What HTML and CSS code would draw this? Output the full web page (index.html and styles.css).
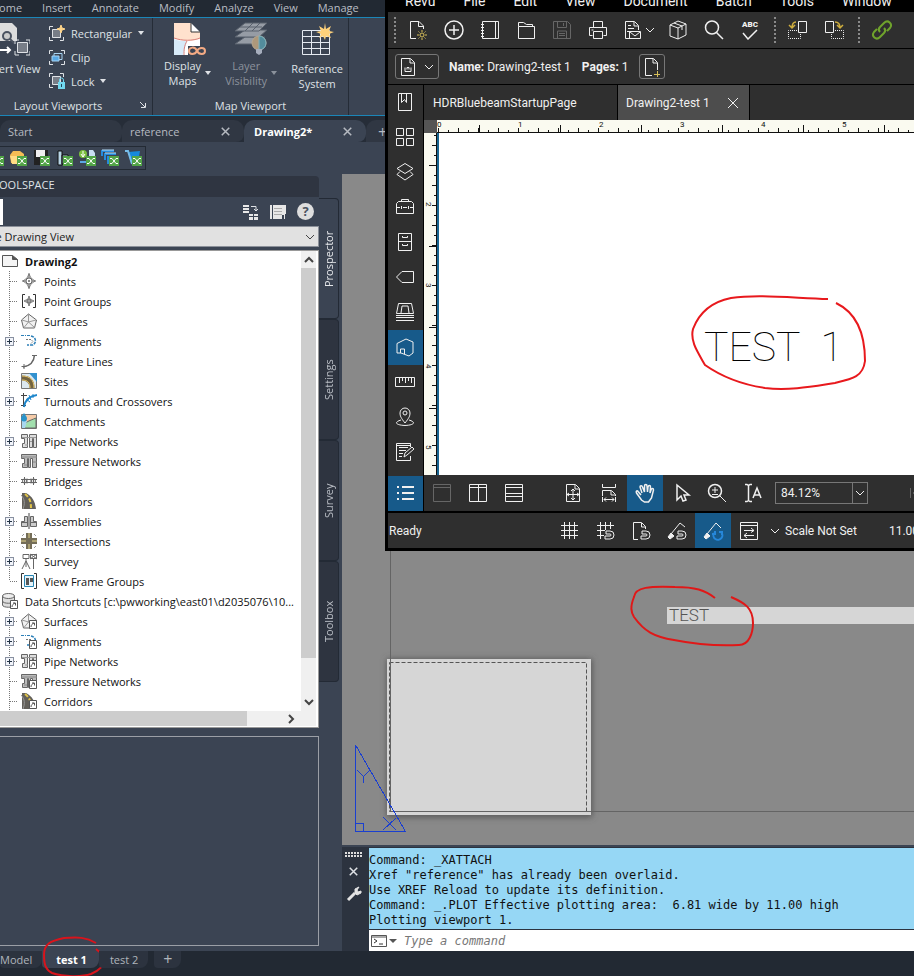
FILE: index.html
```html
<!DOCTYPE html>
<html lang="en">

<head>
    <meta charset="UTF-8" />
    <meta name="viewport" content="width=device-width, initial-scale=1.0" />
    <title>Drawing2 - test 1</title>
    <link rel="stylesheet" href="styles.css">
</head>

<body>
    <!-- Shared icons -->
    <svg class="defs" aria-hidden="true">
        <symbol id="chevron" viewBox="0 0 10 10"><path d="M1 3l4 4 4-4" /></symbol>
        <symbol id="caret" viewBox="0 0 6 4"><path d="M0 0h6L3 4z" fill="currentColor" stroke="none" /></symbol>
        <symbol id="close" viewBox="0 0 12 12"><path d="M1 1l10 10M11 1L1 11" /></symbol>
        <symbol id="branch" viewBox="0 0 20 20"><path d="M9.500 0v20M10 10.500h8" stroke="#777" stroke-dasharray="1 1" /></symbol>
        <symbol id="branch-end" viewBox="0 0 20 20"><path d="M9.500 0v10M10 10.500h8" stroke="#777" stroke-dasharray="1 1" /></symbol>
        <symbol id="branch-plus" viewBox="0 0 20 20"><path d="M9.500 0v20M10 10.500h8" stroke="#777" stroke-dasharray="1 1" /><rect x="5.500" y="6.500" width="8" height="8" fill="#f2f4fa" stroke="#8890a0" /><path d="M7 10.500h5M9.500 8v5" stroke="#234" /></symbol>
        <symbol id="drawing" viewBox="0 0 16 16"><path d="M.5 2.500h10l5 4v7h-15z" fill="#f4f4f4" stroke="#555" /><path d="M10.500 2.500v4h5" fill="#555" stroke="#555" /></symbol>
        <symbol id="points" viewBox="0 0 16 16"><path d="M8 1l2 4 4 3-4 3-2 4-2-4-4-3 4-3z" fill="#eee" stroke="#888" /><circle cx="8" cy="8" r="3" fill="#fff" /><path d="M8 0v5M8 11v5M1 8h4M11 8h4" /><circle cx="8" cy="8" r="1" fill="#666" stroke="none" /></symbol>
        <symbol id="point-groups" viewBox="0 0 16 16"><path d="M4 1.500H1.500v13H4M12 1.500h2.500v13H12" stroke="#333" /><path d="M8 3l1 3 4 2-4 2-1 3-1-3-4-2 4-2zM8 3v10M3 8h10" fill="#eee" stroke="#888" /><circle cx="8" cy="8" r="2" /></symbol>
        <symbol id="surfaces" viewBox="0 0 16 16"><path d="M7.500 1l-7 6 2 8h11l2-8z" fill="#f1f1f1" /><path d="M7.500 1v8m0 0L1 7m6.500 2L15 7M7.500 9L3 14.500M7.500 9l6 5.500" stroke="#999" /></symbol>
        <symbol id="alignments" viewBox="0 0 16 16"><path d="M0 2.500h9" stroke="#2b7fb8" stroke-dasharray="3 1 1 1" /><path d="M10 3c5 1 6 6 2 9H6" stroke="#2b7fb8" stroke-width="1.500" stroke-dasharray="3 1" /><path d="M5 6.500h5l2 2-2 2" stroke="#777" stroke-dasharray="2 1" /></symbol>
        <symbol id="feature-lines" viewBox="0 0 16 16"><path d="M2 14C9 13 13 9 13.500 2" stroke-width="1.500" /><path d="M11 2.500h5M3 11v5M.5 13.500h5" /></symbol>
        <symbol id="sites" viewBox="0 0 16 16"><path d="M.5.5h15v15h-15z" fill="#dce8ef" stroke="#777" /><path d="M8 0h8v9z" fill="#3291cf" stroke="none" /><path d="M1 5c7 0 10 4 10 10" stroke="#716340" stroke-width="5" /><path d="M1 3c8 0 12 4 12 12M1 7c6 0 8 3 8 8" stroke="#e4c36b" /></symbol>
        <symbol id="turnouts" viewBox="0 0 16 16"><path d="M2.500 0v14M0 2.500h6M0 12.500h5" stroke="#444" /><path d="M3 14C4 7 8 3 16 2" stroke="#1d86cb" stroke-width="2" /><path d="M8 2l2 5M5 6l4 3M12 1v4" stroke="#1d86cb" /></symbol>
        <symbol id="catchments" viewBox="0 0 16 16"><path d="M.5 1.500h15v14h-15z" fill="#f5cba8" stroke="#777" /><path d="M1 15C3 9 8 8 15 5v10z" fill="#a2dfae" /><path d="M1 8h5l-2 7H1z" fill="#a9d7ef" stroke="none" /><path d="M3 0C1 3 0 4 0 5.500a3 3 0 006 0C6 4 5 3 3 0z" fill="#2a93c9" stroke="none" /></symbol>
        <symbol id="pipes" viewBox="0 0 16 16"><path d="M.5 1.500h6v13h-5v-4h2v-5h-3zM8.500 1.500h7v13h-3v-9h-1v9h-3z" fill="#ddd" /><path d="M1 4.500h14M4 12h3M9 8.500h2" stroke="#999" /></symbol>
        <symbol id="pressure" viewBox="0 0 16 16"><path d="M.5 1.500h15v13h-4v-9h-2v9h-2v-9h-1v9h-5v-4h2v-5h-3z" fill="#bbb" /><path d="M0 4h16M3 12h3M12 9h4" stroke="#888" /></symbol>
        <symbol id="bridges" viewBox="0 0 16 16"><path d="M0 6.500h16M0 9.500h16M3.500 4v8M6 5.500v5M10 5.500v5M12.500 4v8" /><circle cx="3.500" cy="8" r="2" /><circle cx="12.500" cy="8" r="2" /></symbol>
        <symbol id="corridors" viewBox="0 0 16 16"><path d="M1 0h4c6 3 9 8 10 16H1z" fill="#63605a" stroke="none" /><path d="M4 1c5 4 6 8 6 15" stroke="#e1c448" stroke-width="2" stroke-dasharray="4 2" /><path d="M0 2c4 4 4 9 2 14" stroke="#999" /></symbol>
        <symbol id="assemblies" viewBox="0 0 16 16"><path d="M8 0v16" stroke="#444" /><path d="M.5 13.500v-5h3v-5h3v10zM9.500 13.500v-10h3v5h3v5zM0 9.500h6M10 9.500h6" fill="#ccc" /></symbol>
        <symbol id="intersections" viewBox="0 0 16 16"><path d="M5 0h6v5h5v6h-5v5H5v-5H0V5h5z" fill="#756e58" stroke="none" /><path d="M8 0v5M8 11v5M0 8h5M11 8h5" stroke="#e5d58e" /><path d="M1 3l2-2M13 1l2 2M1 13l2 2M13 15l2-2" stroke="#999" /></symbol>
        <symbol id="survey" viewBox="0 0 16 16"><path d="M2 1.500h6v4H2zM5 6v2L1 16M5 8l4 8M5 8v6M12.500 5v11M9.500 1.500h6v4h-6zM9 1l7 5M16 1L9 6" /></symbol>
        <symbol id="view-frames" viewBox="0 0 16 16"><path d="M3 .5H.5v15H3M13 .5h2.500v15H13" stroke="#333" /><path d="M3.500 2.500h9v11h-9z" fill="#e6f2f8" stroke="#2786b4" /><path d="M5 5h3v7H5zM9 5h3v4H9z" fill="#555" stroke="none" /></symbol>
        <symbol id="shortcut" viewBox="0 0 16 16"><path d="M8.500 7.500h7v8h-7z" fill="#fff" stroke="#555" /><path d="M10 14c0-2 1-3 3-4m-2 0h2.500v2.500" stroke="#555" /></symbol>
        <symbol id="data" viewBox="0 0 16 16"><path d="M.5 3v9c0 3 12 3 12 0V3" fill="#ddd" /><ellipse cx="6.500" cy="3" rx="6" ry="2.500" fill="#eee" /><path d="M.5 8c0 3 12 3 12 0" /></symbol>
        <symbol id="x-badge" viewBox="0 0 18 18"><path d="M8 7h10v10H8z" fill="#52a447" stroke="none" /><path d="M9 9.500h2l4 5h2M17 9.500h-2l-4 5H9" stroke="#fff" /></symbol>
        <symbol id="magnet" viewBox="0 0 24 24"><path d="M13 12h4a4 4 0 010 8h-5v-3h5a1 1 0 000-2h-4z" /></symbol>
    </svg>

    <div class="app">
        <header class="ribbon">
            <nav class="ribbon-tabs">
                <a href="#">Home</a>
                <a href="#">Insert</a>
                <a href="#">Annotate</a>
                <a href="#">Modify</a>
                <a href="#">Analyze</a>
                <a href="#">View</a>
                <a href="#">Manage</a>
            </nav>
            <div class="panels">
                <section class="panel panel-layout">
                    <div class="panel-body">
                        <button class="big-btn tall insert-view">
                            <svg class="ico-big" viewBox="0 0 36 36"><path d="M2 1h16l5 5v13H2z" fill="#ddd" stroke="none" /><circle cx="13" cy="14" r="4" fill="#ccc" stroke="#4b5361" stroke-width="2" /><path d="M16 17l5 5" stroke="#4b5361" stroke-width="2" /><path d="M5 28h11m-3-3l3 3-3 3" stroke="#fff" stroke-width="2" /><path d="M23.500 20.500h10v10h-10z" fill="#777d87" /><path d="M21 22v-4h4M32 18h4v4M21 29v4h4M32 33h4v-4" /></svg>
                            <span>Insert View</span>
                        </button>
                        <div class="small-btns">
                            <button><svg class="ico" viewBox="0 0 16 16"><path d="M3.500 4.500h8v8h-8z" fill="#777d87" /><path d="M.5 5V1.500H4M.5 12v3.500H4M11 15.500h3.500V12" /><path d="M12 0l1 3 3 1-3 1-1 3-1-3-3-1 3-1z" fill="#ffd58a" stroke="#ffd58a" /></svg>Rectangular<svg class="caret"><use href="#caret" /></svg></button>
                            <button><svg class="ico" viewBox="0 0 16 16"><path d="M.5 5V1.500H4M12 1.500h3.500V5M.5 12v3.500H4M12 15.500h3.500V12" /><path d="M5 4.500h8v6H5z" stroke="#a7d3f3" /><path d="M3 7h7v5H3z" fill="#58a9e6" stroke="#a7d3f3" /></svg>Clip</button>
                            <button><svg class="ico" viewBox="0 0 16 16"><path d="M3.500 3.500h8v8h-8z" fill="#777d87" /><path d="M.5 4V.5H4M11 .5h3.500V4M.5 11v3.500H4" /><path d="M9 9h7v7H9z" fill="#72d7ee" stroke="none" /><path d="M10.500 9V7a2 2 0 014 0v2" stroke="#72d7ee" /><path d="M12.500 11v3" stroke="#245" /></svg>Lock<svg class="caret"><use href="#caret" /></svg></button>
                        </div>
                    </div>
                    <div class="panel-title">Layout Viewports <svg class="launcher" viewBox="0 0 6 6"><path d="M0 0l5 5M5.500 1v4.500H1" /></svg></div>
                </section>
                <section class="panel panel-map">
                    <div class="panel-body">
                        <button class="big-btn with-caret">
                            <svg class="ico-big" viewBox="0 0 36 36"><path d="M4 1h17l9 9v23H4z" fill="#fff" stroke="none" /><path d="M4 1h17v9h9v7c-10 3-19 2-26-1z" fill="#ffe1cd" stroke="none" /><path d="M4 17c5 2 8 2 13 2l-4 14H4z" fill="#d7eaf8" stroke="none" /><path d="M4 16c8 3 19 3 26 0M17 19c-3 5-3 9-3 14" stroke="#d98079" /><path d="M21 1v9h9" stroke="#333" /><path d="M18 24h18v9H18z" fill="#3b4453" stroke="none" /><path d="M27 29c-2-5-8-4-8 0s6 4 8 0 8-4 8 0-6 4-8 0z" stroke="#f3aa84" stroke-width="2" /></svg>
                            <span>Display<br>Maps</span><svg class="caret"><use href="#caret" /></svg>
                        </button>
                        <button class="big-btn with-caret" disabled>
                            <svg class="ico-big" viewBox="0 0 36 36"><g fill="#969ca5" stroke="#59616d"><path d="M12 15h20l-8 7H2z" /><path d="M12 8h22l-8 7H2z" /><path d="M12 1h22l-8 8H2z" /></g><path d="M20 1l-8 8M27 1l-8 8M7 5h22" stroke="#59616d" /><circle cx="26" cy="21" r="7" fill="#ad987b" stroke="#b6a68f" /><path d="M26 14a7 7 0 010 14z" fill="#538d9d" stroke="#7fb1bd" /><path d="M23 27h6v4l-3 2-3-2z" fill="#a6aebd" stroke="none" /></svg>
                            <span>Layer<br>Visibility</span><svg class="caret"><use href="#caret" /></svg>
                        </button>
                        <button class="big-btn tall">
                            <svg class="ico-big" viewBox="0 0 36 36"><path d="M3.500 8.500h27v24h-27zM3.500 14.500h27M3.500 20.500h27M3.500 26.500h27M12.500 8.500v24M21.500 8.500v24" stroke="#e5eaf1" /><path d="M26 1l1 6 5-3-2 5 5 1-5 2 2 4-5-2-1 4-2-4-4 2 2-4-5-2 5-1-2-5 5 3z" fill="#ffd27b" stroke="none" /></svg>
                            <span>Reference<br>System</span>
                        </button>
                    </div>
                    <div class="panel-title">Map Viewport</div>
                </section>
                <section class="panel panel-legend">
                    <button class="big-btn legend">
                        <svg class="ico-big" viewBox="0 0 36 36"><path d="M4 3h28v26H4z" fill="#ddd" stroke="none" /><path d="M10 8h2M10 15h2M10 22h2" stroke="#333" stroke-width="2" /></svg>
                        <span>Legend</span>
                    </button>
                </section>
            </div>
        </header>

        <nav class="file-tabs">
            <a href="#" class="file-tab">Start</a>
            <a href="#" class="file-tab">reference<svg class="tab-x"><use href="#close" /></svg></a>
            <a href="#" class="file-tab active">Drawing2*<svg class="tab-x"><use href="#close" /></svg></a>
            <a href="#" class="file-tab add">+</a>
        </nav>

        <div class="workspace">
            <div class="toolspace">
                <div class="xls-bar">
                    <svg viewBox="0 0 18 18"><path d="M0 3h8l4 4v8H0z" fill="#ddd" stroke="none" /><use href="#x-badge" /></svg>
                    <svg viewBox="0 0 18 18"><path d="M1 6l3-4h7l4 3v9H2z" fill="#f5bd55" stroke="none" /><path d="M1 7h15l-3 8H3z" fill="#ffdc86" stroke="none" /><use href="#x-badge" /></svg>
                    <svg viewBox="0 0 18 18"><path d="M2 1h14v15H2z" fill="#222" stroke="none" /><path d="M4 1h9v7H4z" fill="#eee" stroke="none" /><use href="#x-badge" /></svg>
                    <svg viewBox="0 0 18 18"><path d="M3 2h4v14H3zM7 6h6v9H7z" fill="#b9d6e8" stroke="#111" /><use href="#x-badge" /></svg>
                    <svg viewBox="0 0 18 18"><circle cx="5" cy="5" r="4" fill="#7bbf3d" stroke="none" /><path d="M5 2v6M3 5l2 3 2-3" stroke="#fff" /><path d="M11 1h4l2 3v5h-6z" fill="#c8ddf2" stroke="none" /><path d="M2 13h6" stroke="#5ba8e3" stroke-width="2" /><use href="#x-badge" /></svg>
                    <svg viewBox="0 0 18 18"><path d="M1 7V2h12M4 11V5h11M7 15V8h10" stroke="#268bdc" stroke-width="2" /><path d="M1 1h12M4 4h11" stroke="#b5ddf8" /><use href="#x-badge" /></svg>
                    <svg viewBox="0 0 18 18"><path d="M4 3l12-1-2 12H7z" fill="#1689dc" stroke="none" /><path d="M1 2h3l4 13" stroke="#77bce8" stroke-width="2" /><use href="#x-badge" /></svg>
                </div>
                <div class="space-body">
                    <div class="space-main">
                        <h1 class="space-title">TOOLSPACE</h1>
                        <div class="space-tools">
                            <span class="picked"></span>
                            <button aria-label="Item view"><svg class="ico" viewBox="0 0 16 16"><path d="M0 1h6v8H0zM6 10h4v6H6zM11 10h4v6h-4z" fill="#e7e7e7" stroke="none" /><path d="M0 3.500h6M0 6.500h6M6 12.500h9" stroke="#3b4453" /><path d="M8 2.500h5V7m-2-2l2 2 2-2" /></svg></button>
                            <button aria-label="Panorama"><svg class="ico" viewBox="0 0 16 16"><path d="M0 1h2v14H0zM3 1h13v9h-1v5h-1v-4h-2v4H3z" fill="#e7e7e7" stroke="none" /><path d="M4 4.500h8M4 7.500h8M4 10.500h8" stroke="#aaa" /></svg></button>
                            <button class="help" aria-label="Help">?</button>
                        </div>
                        <div class="view-box">
                            <select class="view-select" aria-label="View">
                                <option>Active Drawing View</option>
                            </select>
                            <svg class="chevron"><use href="#chevron" /></svg>
                        </div>
                        <div class="tree">
                            <div class="tree-top">
                                <ul class="tree-list">
                                    <li class="root"><svg class="ico"><use href="#drawing" /></svg><b>Drawing2</b></li>
                                    <li><svg class="br"><use href="#branch" /></svg><svg class="ico"><use href="#points" /></svg>Points</li>
                                    <li><svg class="br"><use href="#branch" /></svg><svg class="ico"><use href="#point-groups" /></svg>Point Groups</li>
                                    <li><svg class="br"><use href="#branch" /></svg><svg class="ico"><use href="#surfaces" /></svg>Surfaces</li>
                                    <li><svg class="br"><use href="#branch-plus" /></svg><svg class="ico"><use href="#alignments" /></svg>Alignments</li>
                                    <li><svg class="br"><use href="#branch" /></svg><svg class="ico"><use href="#feature-lines" /></svg>Feature Lines</li>
                                    <li><svg class="br"><use href="#branch" /></svg><svg class="ico"><use href="#sites" /></svg>Sites</li>
                                    <li><svg class="br"><use href="#branch-plus" /></svg><svg class="ico"><use href="#turnouts" /></svg>Turnouts and Crossovers</li>
                                    <li><svg class="br"><use href="#branch" /></svg><svg class="ico"><use href="#catchments" /></svg>Catchments</li>
                                    <li><svg class="br"><use href="#branch-plus" /></svg><svg class="ico"><use href="#pipes" /></svg>Pipe Networks</li>
                                    <li><svg class="br"><use href="#branch" /></svg><svg class="ico"><use href="#pressure" /></svg>Pressure Networks</li>
                                    <li><svg class="br"><use href="#branch" /></svg><svg class="ico"><use href="#bridges" /></svg>Bridges</li>
                                    <li><svg class="br"><use href="#branch" /></svg><svg class="ico"><use href="#corridors" /></svg>Corridors</li>
                                    <li><svg class="br"><use href="#branch-plus" /></svg><svg class="ico"><use href="#assemblies" /></svg>Assemblies</li>
                                    <li><svg class="br"><use href="#branch" /></svg><svg class="ico"><use href="#intersections" /></svg>Intersections</li>
                                    <li><svg class="br"><use href="#branch-plus" /></svg><svg class="ico"><use href="#survey" /></svg>Survey</li>
                                    <li><svg class="br"><use href="#branch-end" /></svg><svg class="ico"><use href="#view-frames" /></svg>View Frame Groups</li>
                                    <li class="root"><svg class="ico"><use href="#data" /><use href="#shortcut" /></svg>Data Shortcuts [c:\pwworking\east01\d2035076\10...</li>
                                    <li><svg class="br"><use href="#branch-plus" /></svg><svg class="ico"><use href="#surfaces" /><use href="#shortcut" /></svg>Surfaces</li>
                                    <li><svg class="br"><use href="#branch-plus" /></svg><svg class="ico"><use href="#alignments" /><use href="#shortcut" /></svg>Alignments</li>
                                    <li><svg class="br"><use href="#branch-plus" /></svg><svg class="ico"><use href="#pipes" /><use href="#shortcut" /></svg>Pipe Networks</li>
                                    <li><svg class="br"><use href="#branch" /></svg><svg class="ico"><use href="#pressure" /><use href="#shortcut" /></svg>Pressure Networks</li>
                                    <li><svg class="br"><use href="#branch" /></svg><svg class="ico"><use href="#corridors" /><use href="#shortcut" /></svg>Corridors</li>
                                </ul>
                                <div class="vbar">
                                    <svg class="arrow up"><use href="#chevron" /></svg>
                                    <div class="vthumb"></div>
                                    <svg class="arrow"><use href="#chevron" /></svg>
                                </div>
                            </div>
                            <div class="hbar">
                                <div class="hthumb"></div>
                                <svg class="arrow right"><use href="#chevron" /></svg>
                            </div>
                        </div>
                        <div class="preview"></div>
                    </div>
                    <nav class="side-tabs">
                        <button class="active">Prospector</button>
                        <button>Settings</button>
                        <button>Survey</button>
                        <button>Toolbox</button>
                    </nav>
                </div>
            </div>

            <div class="stage">
                <div class="paper">
                    <svg class="sheet" width="572" height="671" viewBox="342 174 572 671">
                        <defs>
                            <filter id="shadow" x="-10%" y="-10%" width="120%" height="120%"><feGaussianBlur stdDeviation="3" /></filter>
                        </defs>
                        <rect x="387" y="659" width="205" height="158" fill="#555" filter="url(#shadow)" />
                        <rect x="387" y="659" width="204" height="156" fill="#d6d6d6" />
                        <rect x="389.500" y="662.500" width="197" height="149" stroke="#555" fill="none" stroke-dasharray="4 2" />
                        <path d="M390.500 174v637.500H2000" stroke="#646464" />
                        <rect x="667" y="607" width="1300" height="17" fill="#d6d6d6" />
                        <text class="cad-text small" x="669" y="621">TEST</text>
                        <g stroke="#1a3fd0" shape-rendering="crispEdges">
                            <path d="M355.500 745v86.500H405.500L355.500 745M355.500 823.500h8v8" />
                            <path d="M357 770l6.500 6.500L370 770M363.500 776.500v6M383 817l13 13M396 818l-13 12" />
                        </g>
                        <path d="M715 598c-10-8-20-11-40-11-25-1-40 0-41 10-4 10-3 15 0 20 10 14 20 20 40 23 25 5 45 6 65 5 10 0 14-12 14-22 0-15-8-20-22-26" stroke="#e01818" stroke-width="2" />
                    </svg>
                </div>
                <div class="command">
                    <div class="command-grip">
                        <svg viewBox="0 0 18 5" width="18" height="5"><path d="M0 1h18M0 4h18" stroke="#ddd" stroke-width="2" stroke-dasharray="2 1" /></svg>
                        <svg class="cmd-x"><use href="#close" /></svg>
                        <svg viewBox="0 0 16 16" width="16" height="16"><path d="M2 14l7-7" stroke="#e4e4e4" stroke-width="3" /><path d="M13 1L9 3v4l2 2 4-2V5l-3 1-1-2z" fill="#e4e4e4" stroke="#e4e4e4" /></svg>
                    </div>
                    <div class="command-main">
                        <pre class="history">Command: _XATTACH
Xref "reference" has already been overlaid.
Use XREF Reload to update its definition.
Command: _.PLOT Effective plotting area:  6.81 wide by 11.00 high
Plotting viewport 1.</pre>
                        <div class="prompt">
                            <svg viewBox="0 0 26 12" width="26" height="12"><path d="M.5.500h15v11H.5zM0 2h16" stroke="#555" /><path d="M3 4l3 2-3 2M8 9h4" stroke="#333" /><path d="M18 4h8l-4 4z" fill="#555" stroke="none" /></svg>
                            <input type="text" aria-label="Command" placeholder="Type a command">
                        </div>
                    </div>
                </div>
            </div>
        </div>

        <nav class="layout-tabs">
            <a href="#">Model</a>
            <a href="#" class="active">test 1<svg class="markup" viewBox="0 0 64 42"><path d="M54 7C44 1 36 1 22 2 8 5 2 8 2 19c0 10 2 15 8 18 12 4 30 4 39 1 9-4 13-9 13-13 0-5-4-9-8-12" /></svg></a>
            <a href="#">test 2</a>
            <a href="#" class="add">+</a>
        </nav>
    </div>

    <!-- PDF viewer window on top of the drawing -->
    <div class="revu">
        <nav class="revu-menu">
            <a href="#">Revu</a>
            <a href="#">File</a>
            <a href="#">Edit</a>
            <a href="#">View</a>
            <a href="#">Document</a>
            <a href="#">Batch</a>
            <a href="#">Tools</a>
            <a href="#">Window</a>
        </nav>
        <div class="revu-tools">
            <i class="grip"></i>
            <button aria-label="New"><svg viewBox="0 0 24 24"><path d="M10 20.500H4.500v-17H13l4.500 4.500v3M12.500 3.500v5h5" /><g stroke="#d8c05a"><circle cx="16" cy="17" r="2" /><path d="M16 12v2M16 20v2M11 17h2M19 17h2M12.500 13.500l1 1M18.500 19.500l1 1M19.500 13.500l-1 1M13.500 19.500l-1 1" /></g></svg></button>
            <button aria-label="Create"><svg viewBox="0 0 24 24"><circle cx="12" cy="12" r="9" stroke-width="1.500" /><path d="M12 7v10M7 12h10" stroke-width="1.500" /></svg></button>
            <button aria-label="Binder"><svg viewBox="0 0 24 24"><path d="M4.500 3.500h16v17h-16zM17.500 3v18M3 6.500h3M3 9.500h3M3 12.500h3M3 15.500h3M3 18.500h3" /></svg></button>
            <button aria-label="Open"><svg viewBox="0 0 24 24"><path d="M4.500 8.500v12h16v-12zM4.500 8.500v-4h5l3 2h6v2" /></svg></button>
            <button aria-label="Save" class="dim"><svg viewBox="0 0 24 24"><path d="M3.500 3.500h14l3 3v14h-17zM7.500 3.500v6h9v-6M13.500 5v3M7.500 20v-7h9v7M9 15.500h6M9 17.500h6" /></svg></button>
            <button aria-label="Print"><svg viewBox="0 0 24 24"><path d="M7.500 9V3.500h9V9M6.500 17.500h-3v-8h17v8h-3M7.500 13.500h9v7h-9zM5.500 12h2" /></svg></button>
            <button aria-label="Email" class="wide"><svg viewBox="0 0 24 24"><path d="M9 20.500H4.500v-17h9l4 4V12M7 7.500h3M13 4v4h4M7 10.500h6M6 13.500h3M8.500 13.500h11v7h-11zM9 14l5 4 5-4" /></svg><svg class="chev"><use href="#chevron" /></svg></button>
            <button aria-label="3D"><svg viewBox="0 0 24 24"><path d="M4 7l8-4 8 3v11l-8 4-8-3zM4 7l8 3 8-4M12 10v11M8 5l8 3v4" /></svg></button>
            <button aria-label="Search"><svg viewBox="0 0 24 24"><circle cx="10" cy="9.500" r="6.500" stroke-width="1.500" /><path d="M14.500 14.500l6.500 6.500" stroke-width="1.500" /></svg></button>
            <button aria-label="Spelling" class="spelling"><span class="abc">ABC</span><svg class="tick" viewBox="0 0 16 11"><path d="M1 4l5 6 9-9" stroke-width="1.500" /></svg></button>
            <i class="grip"></i>
            <button aria-label="Rotate left"><svg viewBox="0 0 24 24"><path d="M12.500 3.500h8v11h-8z" /><path d="M11 12.500H2.500v8h12V15" stroke-dasharray="1 1" /><path d="M10 4C7 4 6 6 6 10M3 7l3 3 3-3" stroke="#cfae3e" stroke-width="1.500" /></svg></button>
            <button aria-label="Rotate right"><svg viewBox="0 0 24 24"><path d="M3.500 3.500h8v11h-8z" /><path d="M13 12.500h8.500v8h-12V15" stroke-dasharray="1 1" /><path d="M13 4c4 0 5 2 5 6M15 7l3 3 3-3" stroke="#cfae3e" stroke-width="1.500" /></svg></button>
            <i class="grip"></i>
            <button aria-label="Link"><svg viewBox="0 0 24 24"><path d="M10 14c-2-2-1-4 0-5l4-4c4-4 9 1 6 5l-3 3M14 10c2 2 1 4 0 5l-4 4c-4 4-9-1-6-5l3-3" stroke="#6fa32c" stroke-width="2" /></svg></button>
        </div>
        <div class="revu-props">
            <button class="box" aria-label="Document"><svg viewBox="0 0 24 24"><path d="M5.500 3.500h9l4 4v13h-13zM14 4v4h4" /><path d="M9 12.500v4h6v-4M11 14.500v-2h2v2" /></svg><svg class="chev"><use href="#chevron" /></svg></button>
            <span class="name"><b>Name:</b> Drawing2-test 1</span>
            <span class="pages"><b>Pages:</b> 1</span>
            <button class="box" aria-label="Add page"><svg viewBox="0 0 24 24"><path d="M12 20.500H5.500v-17h8l4 4V15M13 4v4h4" /><path d="M17.500 16v6M14 19.500h6" stroke="#d8c05a" /></svg></button>
        </div>
        <div class="revu-body">
            <aside class="revu-side">
                <button aria-label="Bookmarks"><svg viewBox="0 0 24 24"><path d="M5.500 3.500h13v17h-13zM8.500 3.500v9l3-3 2 3v-9" /></svg></button>
                <button aria-label="Thumbnails"><svg viewBox="0 0 24 24"><path d="M3.500 3.500h7v7h-7zM13.500 3.500h7v7h-7zM3.500 13.500h7v7h-7zM13.500 13.500h7v7h-7z" /></svg></button>
                <button aria-label="Layers"><svg viewBox="0 0 24 24"><path d="M12 3.500l8 5-8 5-8-5zM7 11.500l-3 3 8 5.500 8-5.500-3-3" /></svg></button>
                <button aria-label="Tool chest"><svg viewBox="0 0 24 24"><path d="M3.500 8.500l2-2h13l2 2v10h-17zM8.500 6V4.500h7V6M3.500 12.500H7m3 0h4m3 0h3.500M8.500 11v3M15.500 11v3" /></svg></button>
                <button aria-label="Properties"><svg viewBox="0 0 24 24"><path d="M5.500 3.500h13v17h-13zM5.500 11.500h13M9.500 6v1.500h5V6M9.500 14v1.500h5V14" /></svg></button>
                <button aria-label="Measure"><svg viewBox="0 0 24 24"><path d="M9 6.500h11.500v11H9L3.500 12z" /></svg></button>
                <button aria-label="Sets"><svg viewBox="0 0 24 24"><path d="M5.500 3.500h13l2 10h-17zM8 13l1-7h6l1 7M3 15.500h18M3 17.500h18M3 20.500h18" /></svg></button>
                <button aria-label="Spaces" class="on"><svg viewBox="0 0 24 24"><path d="M4 8.500l9-4.500 7 3v11l-4 3-8-3H4zM7.500 18v-4h4v5" /></svg></button>
                <button aria-label="Ruler"><svg viewBox="0 0 24 24"><path d="M2.500 7.500h19v9h-19zM6.500 8v5M9.500 8v3M12.500 8v5M15.500 8v3M18.500 8v5" /></svg></button>
                <button aria-label="Location"><svg viewBox="0 0 24 24"><path d="M12 18C8 13 7 11 7 8a5 5 0 0110 0c0 3-1 5-5 10z" /><circle cx="12" cy="8" r="2" /><path d="M8 15c-7 2-6 5 4 5.500 10-.5 11-3.500 4-5.500" /></svg></button>
                <button aria-label="Forms"><svg viewBox="0 0 24 24"><path d="M17.500 7V3.500h-14v17h14V16M6 7.500h9M6 10.500h7M6 13.500h4M6 16.500h3M3.500 5.500h14M11 17l1-4 7-6 2 2-7 6z" /></svg></button>
                <button aria-label="Markups list" class="on list"><svg viewBox="0 0 24 24"><path d="M9 6h12M9 12h12M9 18h12M4 6h2M4 12h2M4 18h2" stroke-width="2" /></svg></button>
            </aside>
            <div class="revu-main">
                <nav class="doc-tabs">
                    <a href="#" class="doc-tab">HDRBluebeamStartupPage</a>
                    <a href="#" class="doc-tab active">Drawing2-test 1<svg class="doc-x"><use href="#close" /></svg></a>
                </nav>
                <div class="doc">
                    <div class="corner"></div>
                    <div class="ruler-x"><span>0</span><span>1</span><span>2</span><span>3</span><span>4</span><span>5</span></div>
                    <div class="ruler-y"><span>2</span><span>3</span><span>4</span><span>5</span></div>
                    <div class="page">
                        <svg width="475" height="342" viewBox="439 133 475 342">
                            <text class="cad-text" x="704" y="361">TEST<tspan dx="20">1</tspan></text>
                            <path d="M828 299c-35-1-70-5-97-1-20 4-32 15-38 31-3 12 4 22 12 36 20 14 40 20 60 23 25 3 50-2 70-5 17-4 28-6 30-22 0-23-6-47-29-58" stroke="#e8191d" stroke-width="2" />
                        </svg>
                    </div>
                </div>
                <div class="revu-nav">
                    <button class="dim" aria-label="Single pane"><svg viewBox="0 0 24 24"><path d="M3.500 3.500h17v17h-17zM3.500 6.500h17" /></svg></button>
                    <button aria-label="Split vertical"><svg viewBox="0 0 24 24"><path d="M3.500 3.500h17v17h-17zM3.500 6.500h17M12.500 3.500v17" /></svg></button>
                    <button aria-label="Split horizontal"><svg viewBox="0 0 24 24"><path d="M3.500 3.500h17v17h-17zM3.500 6.500h17M3.500 12.500h17M3.500 15.500h17" /></svg></button>
                    <button class="gap" aria-label="Fit page"><svg viewBox="0 0 24 24"><path d="M5.500 3.500h9l4 4v13h-13zM14 4v4h4M12 8v11M6 13.500h12M10 10l2-2 2 2M10 17l2 2 2-2M8 12l-2 1.500L8 15M16 12l2 1.500-2 1.500" /></svg></button>
                    <button aria-label="Fit width"><svg viewBox="0 0 24 24"><path d="M5.500 3v3.500h13V3M5.500 15V9.500h9l4 4V15M14 10v4h4M5.500 16v5M18.500 16v5M7 18.500h10M9 16.500l-2 2 2 2M15 16.500l2 2-2 2" /></svg></button>
                    <button class="on" aria-label="Pan"><svg viewBox="0 0 24 24"><path d="M8 14L5.500 11c-1-2-3-1-2 1l5 7 3 2h4l3-4 2-8c0-2-2-2-2.500 0L17 12l.5-6c0-2-2-2-2.500 0l-.5 5-.5-6c0-2-2.500-2-2.500 0v6L9.500 6c-.5-2-2.500-1.500-2.500 0l2 6" stroke-width="1.500" /></svg></button>
                    <button aria-label="Select"><svg viewBox="0 0 24 24"><path d="M8 4v15l4-4 2 5 3-1-2-5h5z" stroke-width="1.500" /></svg></button>
                    <button aria-label="Zoom"><svg viewBox="0 0 24 24"><circle cx="10" cy="10" r="6.500" stroke-width="1.500" /><path d="M15 15l6 6M7 9h6M10 6v6M7 13.500h6" /></svg></button>
                    <button aria-label="Select text"><svg viewBox="0 0 24 24"><path d="M4 3.500h2l1.500 1 1.500-1h2M7.500 4v16M4 20.500h2l1.500-1 1.500 1h2M12 17l4-10 4 10M13 14h6" stroke-width="1.500" /></svg></button>
                    <div class="zoom">
                        <input type="text" aria-label="Zoom level" value="84.12%">
                        <button aria-label="Zoom levels"><svg class="chev"><use href="#chevron" /></svg></button>
                    </div>
                    <button class="dim first" aria-label="First page"><svg viewBox="0 0 24 24"><path d="M8.500 7v10M18 7l-7 5 7 5z" /></svg></button>
                </div>
            </div>
        </div>
        <div class="revu-status">
            <span class="ready">Ready</span>
            <button aria-label="Grid"><svg viewBox="0 0 24 24"><path d="M7.500 3v17M12.500 3v17M17.500 3v17M4 6.500h17M4 11.500h17M4 16.500h17" /></svg></button>
            <button aria-label="Snap to grid"><svg viewBox="0 0 24 24"><path d="M7.500 3v17M12.500 3v8M17.500 3v7M4 6.500h17M4 11.500h8M4 16.500h7" /><use href="#magnet" /></svg></button>
            <button aria-label="Snap to content"><svg viewBox="0 0 24 24"><path d="M9 20.500H4.500v-17h8l4 4V10M12.500 4v4h4" /><use href="#magnet" /></svg></button>
            <button aria-label="Snap to markup"><svg viewBox="0 0 24 24"><path d="M6 15l9-11 5 4" /><path d="M3 18l3-4 3 3-4 3z" fill="currentColor" /><use href="#magnet" /></svg></button>
            <button class="on" aria-label="Reuse"><svg viewBox="0 0 24 24"><path d="M6 15l9-11 5 5" /><path d="M3 18l3-4 3 3-4 3z" fill="currentColor" /><path d="M14 12v3h-3M13 14a4.500 4.500 0 107-1M21 16v-3h-3" stroke="#2687d9" stroke-width="2" /></svg></button>
            <button aria-label="Sync"><svg viewBox="0 0 24 24"><path d="M3.500 3.500h17v17h-17zM3.500 6.500h17M7 11.500h10M14 9l3 2.500-3 2M17 16.500H7M10 14l-3 2.500 3 2.500" /></svg></button>
            <span class="scale"><svg class="chev"><use href="#chevron" /></svg>Scale Not Set</span>
            <span class="dims">11.00</span>
        </div>
    </div>
</body>

</html>
```
FILE: styles.css
```css
* {
    box-sizing: border-box;
}

body {
    margin: 0;
    height: 100vh;
    overflow: hidden;
    position: relative;
    background: #3b4453;
    color: #dfe2e6;
    font-family: "Open Sans", "Noto Sans", sans-serif;
    font-size: 11px;
}

a {
    color: inherit;
    text-decoration: none;
}

button {
    background: none;
    border: none;
    padding: 0;
    margin: 0;
    color: inherit;
    font: inherit;
}

svg {
    display: block;
    flex: none;
    fill: none;
    stroke: currentColor;
}

text {
    stroke: none;
}

.defs {
    position: absolute;
    width: 0;
    height: 0;
}

.ico {
    width: 16px;
    height: 16px;
}

.caret {
    width: 6px;
    height: 4px;
}

.app {
    display: flex;
    flex-direction: column;
    height: 100%;
}

/* Ribbon */
.ribbon-tabs {
    display: flex;
    gap: 20px;
    height: 17px;
    margin-left: -9px;
    background: #222933;
    color: #b9bdc3;
    line-height: 15px;
}

.panels {
    display: flex;
    height: 99px;
    border-top: 1px solid #1b86b8;
    border-bottom: 1px solid #1b86b8;
}

.panel {
    display: flex;
    flex-direction: column;
    border-right: 1px solid #252c37;
}

.panel-layout {
    width: 153px;
}

.panel-map {
    width: 196px;
}

.panel-legend {
    flex: 1;
    border: none;
    padding-left: 16px;
}

.panel-body {
    display: flex;
    flex: 1;
}

.panel-map .panel-body {
    justify-content: space-between;
    padding: 0 5px 0 11px;
}

.big-btn {
    display: grid;
    grid-template-rows: 36px auto;
    justify-items: center;
    align-content: start;
    padding-top: 4px;
    line-height: 15px;
    white-space: nowrap;
}

.big-btn.tall {
    grid-template-rows: 39px auto;
}

.with-caret {
    grid-template-columns: auto auto;
    align-items: center;
    column-gap: 4px;
}

.with-caret .ico-big {
    grid-column: 1 / 3;
}

.insert-view {
    margin-left: -26px;
    width: 70px;
    padding-left: 6px;
}

.ico-big {
    width: 36px;
    height: 36px;
}

.big-btn:disabled {
    color: #8b929c;
}

.small-btns {
    display: flex;
    flex-direction: column;
    gap: 8px;
    padding: 7px 0 0 5px;
}

.small-btns button {
    display: flex;
    align-items: center;
    gap: 6px;
    height: 16px;
}

.panel-title {
    display: flex;
    justify-content: center;
    align-items: center;
    gap: 38px;
    height: 20px;
    padding-left: 8px;
}

.panel-map .panel-title {
    padding: 0;
}

.launcher {
    width: 6px;
    height: 6px;
}

/* Open drawings */
.file-tabs {
    display: flex;
    height: 26px;
    padding-top: 4px;
    background: #262d38;
    line-height: 22px;
}

.file-tab {
    display: flex;
    justify-content: space-between;
    align-items: center;
    width: 122px;
    padding: 1px 14px 0 8px;
    background: #303743;
    border-radius: 10px 10px 8px 0;
    color: #b6bac1;
}

.file-tab.active {
    background: #3b4453;
    color: #fff;
    font-weight: bold;
    padding-left: 10px;
}

.file-tab.add {
    width: 40px;
    padding-left: 12px;
    font-size: 16px;
}

.tab-x {
    width: 9px;
    height: 9px;
    stroke-width: 2;
    color: #b6bac1;
}

/* Toolspace */
.workspace {
    display: flex;
    flex: 1;
    min-height: 0;
}

.toolspace {
    width: 342px;
    display: flex;
    flex-direction: column;
}

.xls-bar {
    display: flex;
    gap: 5px;
    width: 146px;
    height: 24px;
    margin: 4px 0 6px;
    padding: 2px 0 0;
    border: 1px solid #232a34;
    border-left: none;
    overflow: hidden;
}

.xls-bar svg {
    width: 18px;
    height: 18px;
}

.xls-bar svg:first-child {
    margin-left: -14px;
}

.space-body {
    display: flex;
    flex: 1;
    min-height: 0;
}

.space-main {
    width: 319px;
    display: flex;
    flex-direction: column;
    padding-bottom: 5px;
}

.space-title {
    margin: 0 0 0 -7px;
    height: 21px;
    background: #2f3541;
    border-radius: 0 4px 0 0;
    font-size: 11px;
    font-weight: normal;
    line-height: 18px;
}

.space-tools {
    display: flex;
    align-items: center;
    gap: 11px;
    height: 29px;
    padding-right: 5px;
}

.picked {
    width: 3px;
    height: 26px;
    margin-right: auto;
    background: #fff;
}

.help {
    width: 17px;
    height: 17px;
    border-radius: 50%;
    background: #dedede;
    color: #4a5260;
    font-size: 13px;
    font-weight: bold;
    line-height: 17px;
}

.view-box {
    display: grid;
    align-items: center;
    height: 21px;
    margin: 0 0 3px -34px;
    color: #444;
}

.view-select {
    grid-area: 1 / 1;
    height: 21px;
    padding: 0 0 0 4px;
    appearance: none;
    border: 1px solid #8b9099;
    border-radius: 0;
    background: #e1e1e1;
    color: #222;
    font: inherit;
}

.chevron {
    grid-area: 1 / 1;
    justify-self: end;
    width: 10px;
    height: 10px;
    margin-right: 4px;
}

.tree {
    display: flex;
    flex-direction: column;
    padding-right: 2px;
    border: 1px solid #999;
    border-left: none;
    background: #fff;
    color: #111;
}

.tree-top {
    display: flex;
}

.tree-list {
    flex: 1;
    min-width: 0;
    margin: 0;
    padding: 0;
    list-style: none;
}

.tree-list li {
    display: flex;
    align-items: center;
    height: 20px;
    white-space: nowrap;
}

.tree-list .ico {
    margin: 0 7px 0 1px;
    stroke: #666;
}

.tree-list .root .ico {
    margin-left: 2px;
}

.br {
    width: 20px;
    height: 20px;
}

.vbar {
    display: flex;
    flex-direction: column;
    align-items: center;
    gap: 3px;
    width: 15px;
    padding: 4px 0;
    background: #f0f0f0;
    color: #444;
}

.vthumb {
    width: 15px;
    height: 390px;
    margin-bottom: auto;
    background: #cdcdcd;
}

.arrow {
    width: 10px;
    height: 10px;
    stroke-width: 2;
}

.up {
    transform: rotate(180deg);
}

.right {
    transform: rotate(-90deg);
}

.hbar {
    display: flex;
    align-items: center;
    justify-content: space-between;
    height: 15px;
    margin-bottom: 1px;
    padding-right: 20px;
    background: #f0f0f0;
    color: #444;
}

.hthumb {
    width: 247px;
    height: 15px;
    background: #cdcdcd;
}

.preview {
    flex: 1;
    margin-top: 8px;
    border: 1px solid #9b9fa6;
    border-left: none;
}

.side-tabs {
    display: flex;
    flex-direction: column;
    width: 20px;
    padding-top: 22px;
}

.side-tabs button {
    height: 121px;
    width: 20px;
    background: #2e3440;
    border: 1px solid #232a35;
    border-right: none;
    border-radius: 4px 0 0 4px;
    color: #b9bdc4;
    writing-mode: vertical-rl;
    transform: rotate(180deg);
}

.side-tabs .active {
    background: #3b4453;
    color: #e6e8eb;
}

/* Drawing area */
.stage {
    flex: 1;
    min-width: 0;
    display: flex;
    flex-direction: column;
    padding-top: 32px;
}

.paper {
    flex: 1;
    min-height: 0;
    overflow: hidden;
    background: #898989;
}

.sheet {
    overflow: visible;
    stroke: none;
}

.cad-text {
    fill: #000;
    font-family: Roboto, sans-serif;
    font-size: 41px;
    font-weight: 100;
}

.cad-text.small {
    fill: #555;
    font-size: 17px;
    font-weight: 300;
}

.command {
    display: flex;
    margin-top: 2px;
    background: #2c333f;
}

.command-grip {
    width: 27px;
    display: flex;
    flex-direction: column;
    align-items: center;
    gap: 10px;
    padding: 5px 4px 0 0;
}

.cmd-x {
    width: 9px;
    height: 9px;
    stroke-width: 2;
}

.command-main {
    flex: 1;
    padding-top: 1px;
}

.history {
    margin: 0;
    height: 81px;
    padding: 5px 0 0;
    background: #96d7f5;
    color: #111;
    font: 12px/15px "DejaVu Sans Mono", monospace;
}

.prompt {
    display: flex;
    align-items: center;
    gap: 7px;
    height: 21px;
    margin-top: 1px;
    padding-left: 2px;
    background: #fff;
}

.prompt input {
    flex: 1;
    border: none;
    padding: 0;
    font: italic 12px "DejaVu Sans Mono", monospace;
}

.prompt input::placeholder {
    color: #777;
}

.layout-tabs {
    display: flex;
    height: 25px;
    padding-bottom: 8px;
    background: #222933;
    color: #b0b5bc;
    line-height: 17px;
}

.layout-tabs a {
    position: relative;
    padding: 0 10px 0 0;
    background: #2c333f;
    border-radius: 0 0 8px 4px;
}

.layout-tabs .active {
    background: #3b4453;
    color: #fff;
    font-weight: bold;
    padding: 0 12px 0 14px;
}

.layout-tabs a:nth-child(3) {
    padding-left: 11px;
}

.layout-tabs .add {
    margin-left: 6px;
    padding: 0 9px;
    font-size: 16px;
}

.markup {
    position: absolute;
    left: 0;
    top: -15px;
    width: 64px;
    height: 42px;
    stroke: #d8141c;
    stroke-width: 2;
}

/* Revu window */
.revu {
    position: absolute;
    left: 385px;
    right: 0;
    top: 0;
    padding: 0 0 3px 3px;
    overflow: hidden;
    background: #000;
    color: #f0f0f0;
    font-family: Roboto, sans-serif;
    font-size: 12px;
}

.revu-menu {
    display: flex;
    align-items: flex-end;
    gap: 28px;
    height: 12px;
    padding: 0 0 3px 17px;
    font-size: 14px;
    line-height: 16px;
}

.revu-tools,
.revu-props,
.revu-nav,
.revu-status {
    display: flex;
    align-items: center;
    background: #2f2f2f;
    white-space: nowrap;
}

.revu-tools button,
.revu-nav > button,
.revu-status button {
    display: flex;
    flex: none;
    align-items: center;
    justify-content: center;
    width: 36px;
    height: 36px;
}

.revu button svg {
    width: 24px;
    height: 24px;
}

.revu svg.chev,
.revu button svg.chev {
    width: 10px;
    height: 10px;
}

.revu .dim {
    color: #666;
}

.revu .on {
    background: #175a8a;
}

.revu-tools {
    height: 36px;
    padding-left: 6px;
}

.grip {
    flex: none;
    width: 2px;
    height: 26px;
    margin-right: 4px;
    background: repeating-linear-gradient(#8a8a8a 0 2px, transparent 2px 4px);
}

.revu-tools button + .grip {
    margin-left: 6px;
}

.revu-tools button.wide {
    width: 44px;
}

.revu-tools .spelling {
    flex-direction: column;
}

.abc {
    font-size: 8px;
    font-weight: 900;
    line-height: 8px;
}

.revu-tools button .tick {
    width: 16px;
    height: 11px;
}

.revu-props {
    height: 35px;
    margin: 1px 0;
    padding-left: 7px;
}

.box {
    display: flex;
    align-items: center;
    gap: 4px;
    height: 25px;
    padding: 0 4px 0 0;
    border: 1px solid #777;
    border-radius: 3px;
}

.pages + .box {
    padding: 0;
}

.name {
    margin: 0 11px 0 10px;
}

.pages {
    margin-right: 10px;
}

.revu-body {
    display: flex;
}

.revu-side {
    display: flex;
    flex-direction: column;
    width: 35px;
    background: #2f2f2f;
}

.revu-side button {
    display: flex;
    align-items: center;
    height: 35px;
    padding: 0 0 1px 5px;
}

.revu-side .list {
    margin-top: 6px;
}

.revu-main {
    flex: 1;
    min-width: 0;
    display: flex;
    flex-direction: column;
    margin-left: 1px;
}

.doc-tabs {
    display: flex;
    height: 35px;
    background: #2f2f2f;
    line-height: 34px;
}

.doc-tab {
    display: flex;
    align-items: center;
    width: 194px;
    padding-left: 9px;
    border-right: 1px solid #000;
}

.doc-tab.active {
    width: 132px;
    padding-left: 8px;
    gap: 17px;
    background: #4d4d4d;
}

.doc-x {
    width: 12px;
    height: 12px;
}

.doc {
    flex: 1;
    min-height: 0;
    display: grid;
    grid-template-columns: 13px 1fr;
    grid-template-rows: 13px 1fr;
    overflow: hidden;
}

.corner {
    background: #555;
}

.ruler-x,
.ruler-y {
    display: flex;
    overflow: hidden;
    color: #111;
    font-size: 8px;
    line-height: 9px;
}

.ruler-x {
    border-bottom: 1px solid #111;
    background:
        repeating-linear-gradient(90deg, #111 0 1px, transparent 1px 81px) 42px 100% / 100% 7px no-repeat,
        repeating-linear-gradient(90deg, #111 0 1px, transparent 1px 20px) 1px 100% / 100% 4px no-repeat,
        repeating-linear-gradient(90deg, #111 0 1px, transparent 1px 10px) 1px 100% / 100% 2px no-repeat,
        #fafaf0;
}

.ruler-x span {
    flex: none;
    width: 81px;
}

/* Labels run on past the page, so they must not set its height */
.ruler-y {
    flex-direction: column;
    height: 0;
    min-height: 100%;
    padding-top: 69px;
    border-right: 1px solid #111;
    background:
        repeating-linear-gradient(#111 0 1px, transparent 1px 81px) 100% 32px / 7px 100% no-repeat,
        repeating-linear-gradient(#111 0 1px, transparent 1px 20px) 100% 12px / 4px 100% no-repeat,
        repeating-linear-gradient(#111 0 1px, transparent 1px 10px) 100% 2px / 2px 100% no-repeat,
        #fafaf0;
}

.ruler-y span {
    flex: none;
    width: 9px;
    height: 81px;
    writing-mode: vertical-rl;
}

.page {
    overflow: hidden;
    border-left: 2px solid #17648f;
    background: #fff;
}

.revu-nav {
    height: 36px;
}

.revu-nav .gap {
    margin-left: 23px;
}

.zoom {
    display: flex;
    flex: none;
    width: 93px;
    height: 22px;
    margin-left: 4px;
    border: 1px solid #777;
}

.zoom input {
    flex: 1;
    min-width: 0;
    padding: 0 5px;
    border: none;
    background: none;
    color: #f0f0f0;
    font: 12px Roboto, sans-serif;
}

.zoom button {
    display: flex;
    align-items: center;
    justify-content: center;
    width: 15px;
    border-left: 1px solid #777;
}

.revu-nav .first {
    margin-left: 28px;
}

.revu-status {
    height: 35px;
    margin-top: 2px;
}

.revu-status button {
    height: 35px;
}

.ready {
    flex: none;
    width: 163px;
    padding-left: 1px;
}

.scale {
    display: flex;
    flex: none;
    align-items: center;
    gap: 5px;
    margin: 0 32px 0 3px;
}
```
